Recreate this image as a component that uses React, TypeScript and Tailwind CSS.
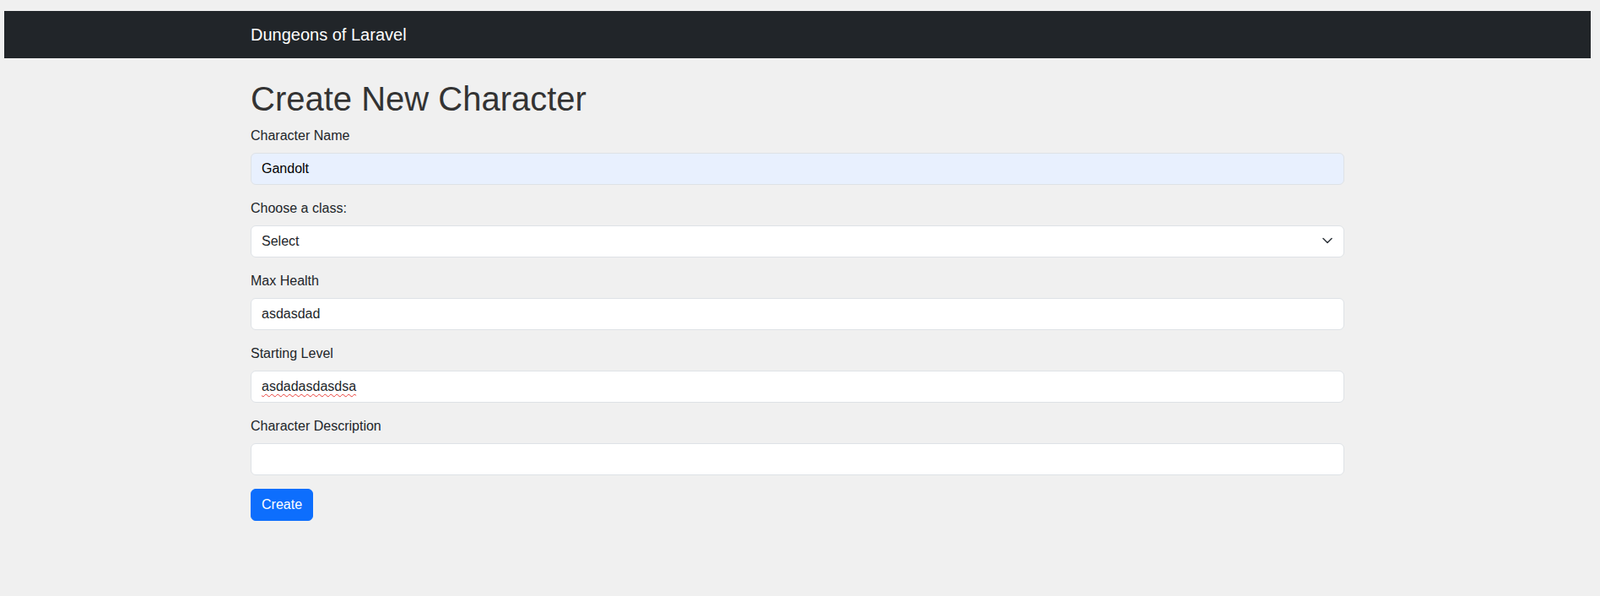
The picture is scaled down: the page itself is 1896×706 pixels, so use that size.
import React from "react"

const inputClass =
  "block w-full h-[38px] px-3 py-1.5 text-base text-[#212529] bg-white border border-[#dee2e6] rounded-[6px] outline-none"

const Field = ({ label, children }: { label: string; children: React.ReactNode }) => (
  <div className="mb-4">
    <label className="block mb-2 text-base leading-6 text-[#212529]">{label}</label>
    {children}
  </div>
)

export default function App() {
  return (
    <div
      className="min-h-[706px] bg-[#f0f0f0] pt-[13px] pl-[5px] pr-[11px]"
      style={{ fontFamily: '"Liberation Sans", Arial, sans-serif' }}
    >
      <nav className="bg-[#212529] h-[56px] flex items-center">
        <div className="w-[1320px] mx-auto px-3">
          <span className="text-[20px] leading-[30px] text-white">Dungeons of Laravel</span>
        </div>
      </nav>

      <div className="w-[1320px] mx-auto px-3">
        <h1 className="mt-6 mb-2 text-[40px] leading-[48px] text-[#333333]">Create New Character</h1>

        <form onSubmit={(e) => e.preventDefault()}>
          <Field label="Character Name">
            <input
              className={inputClass + " !bg-[#e8f0fe] text-black"}
              defaultValue="Gandolt"
              readOnly
            />
          </Field>

          <Field label="Choose a class:">
            <div className="relative">
              <select className={inputClass + " appearance-none pr-9"} defaultValue="">
                <option value="">Select</option>
                <option value="warrior">Warrior</option>
                <option value="mage">Mage</option>
                <option value="rogue">Rogue</option>
              </select>
              <svg
                className="absolute right-[14px] top-[14px] pointer-events-none"
                width="12"
                height="8"
                viewBox="0 0 12 8"
                fill="none"
              >
                <path d="M1 1.5 6 6.5 11 1.5" stroke="#343a40" strokeWidth="1.6" strokeLinecap="round" strokeLinejoin="round" />
              </svg>
            </div>
          </Field>

          <Field label="Max Health">
            <input className={inputClass} defaultValue="asdasdad" readOnly />
          </Field>

          <Field label="Starting Level">
            <div className="relative">
              <input className={inputClass} defaultValue="asdadasdasdsa" readOnly />
              {/* spellcheck squiggle */}
              <span
                aria-hidden="true"
                className="absolute left-[13px] top-[7px] text-base leading-6 text-transparent underline decoration-wavy decoration-[#e8403a] decoration-1 underline-offset-[3px] pointer-events-none select-none"
              >
                asdadasdasdsa
              </span>
            </div>
          </Field>

          <Field label="Character Description">
            <input className={inputClass} defaultValue="" readOnly />
          </Field>

          <button
            type="submit"
            className="h-[38px] px-3 text-base text-white bg-[#0d6efd] border border-[#0d6efd] rounded-[6px]"
          >
            Create
          </button>
        </form>
      </div>
    </div>
  )
}
